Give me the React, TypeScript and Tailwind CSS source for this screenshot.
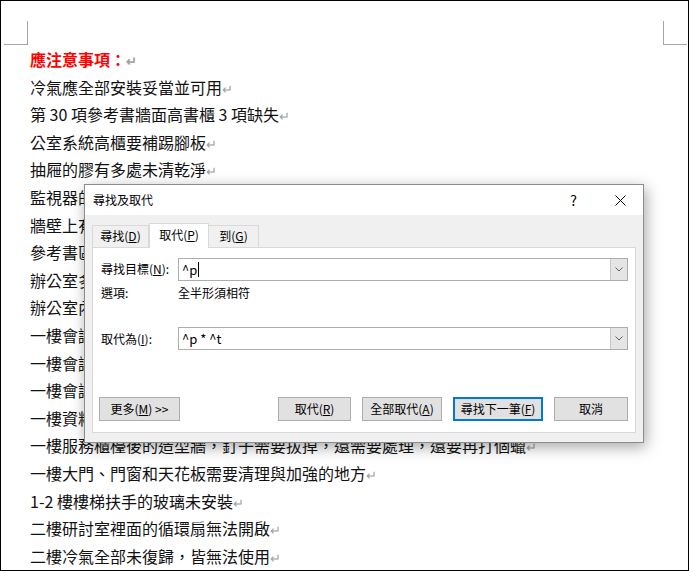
import React from 'react';

const font = { fontFamily: '"Noto Sans CJK TC", "Noto Sans", sans-serif' };

const lines = [
  '冷氣應全部安裝妥當並可用',
  '第 30 項參考書牆面高書櫃 3 項缺失',
  '公室系統高櫃要補踢腳板',
  '抽屜的膠有多處未清乾淨',
  '監視器的電源線需要整理',
  '牆壁上有多處油漆剝落',
  '參考書區的燈管不亮',
  '辦公室多處插座未固定',
  '辦公室內的窗簾需要更換',
  '一樓會議室桌椅需要清潔',
  '一樓會議室投影機無法使用',
  '一樓會議室門鎖故障',
  '一樓資料室的櫃子需要調整',
  '一樓服務櫃檯後的造型牆，釘子需要拔掉，還需要處理，還要再打個蠟',
  '一樓大門、門窗和天花板需要清理與加強的地方',
  '1-2 樓樓梯扶手的玻璃未安裝',
  '二樓研討室裡面的循環扇無法開啟',
  '二樓冷氣全部未復歸，皆無法使用',
];

const Mark = () => <span className="text-[#a0a0a0] text-[13px] leading-none">↵</span>;

const Btn = ({ children, w, primary }: { children: React.ReactNode; w: string; primary?: boolean }) => (
  <div
    className={`${w} h-[24px] flex items-center justify-center bg-[#e1e1e1] ${
      primary ? 'border-2 border-[#0078d7]' : 'border border-[#adadad]'
    }`}
  >
    {children}
  </div>
);

const Combo = ({ value }: { value: React.ReactNode }) => (
  <div className="flex-1 h-[23px] border border-[#adadad] bg-white flex items-stretch">
    <div className="flex-1 flex items-center pl-[3px] text-[13px]">{value}</div>
    <div className="w-[17px] bg-[#e5e5e5] border-l border-[#c8c8c8] flex items-center justify-center">
      <svg width="8" height="5" viewBox="0 0 8 5">
        <path d="M0.5 0.5 L4 4 L7.5 0.5" stroke="#606060" fill="none" strokeWidth="1" />
      </svg>
    </div>
  </div>
);

const Dialog = () => (
  <div
    className="absolute left-[83px] top-[183px] w-[560px] h-[259px] border border-[#8c8c8c] bg-[#f0f0f0] shadow-[2px_4px_14px_rgba(0,0,0,0.35)] text-[12px] text-black flex flex-col"
    style={font}
  >
    <div className="h-[30px] bg-white flex items-center pl-[8px] pr-[17px]">
      <span className="flex-1">尋找及取代</span>
      <span className="text-[14px] mr-[38px]">?</span>
      <svg width="11" height="11" viewBox="0 0 11 11">
        <path d="M0.5 0.5 L10.5 10.5 M10.5 0.5 L0.5 10.5" stroke="#000" strokeWidth="1" />
      </svg>
    </div>
    <div className="px-[7px] pt-[8px] flex flex-col">
      <div className="flex items-end h-[24px]">
        <div className="h-[22px] w-[57px] pb-[2px] border border-b-0 border-[#d9d9d9] flex items-center justify-center">
          尋找(<u>D</u>)
        </div>
        <div className="h-[25px] w-[60px] pb-[3px] -mb-px relative z-10 bg-white border border-b-0 border-[#d9d9d9] flex items-center justify-center">
          取代(<u>P</u>)
        </div>
        <div className="h-[22px] w-[50px] pb-[2px] border border-b-0 border-l-0 border-[#d9d9d9] flex items-center justify-center">
          到(<u>G</u>)
        </div>
      </div>
      <div className="h-[186px] bg-white border border-[#d9d9d9] pl-[6px] pr-[7px] pt-[10px] flex flex-col">
        <div className="flex items-center">
          <span className="w-[79px] pl-[2px] pb-[2px]">尋找目標(<u>N</u>):</span>
          <Combo value={<span className="flex items-center">^p<span className="inline-block w-px h-[15px] bg-black ml-[1px]" /></span>} />
        </div>
        <div className="flex items-center h-[16px] mt-[4px]">
          <span className="w-[79px] pl-[2px]">選項:</span>
          <span>全半形須相符</span>
        </div>
        <div className="flex items-center mt-[26px]">
          <span className="w-[79px] pl-[2px]">取代為(<u>I</u>):</span>
          <Combo value="^p * ^t" />
        </div>
        <div className="flex items-center mt-[47px]">
          <Btn w="w-[81px]">更多(<u>M</u>) &gt;&gt;</Btn>
          <div className="flex-1" />
          <div className="flex gap-[11px]">
            <Btn w="w-[73px]">取代(<u>R</u>)</Btn>
            <Btn w="w-[80px]">全部取代(<u>A</u>)</Btn>
            <Btn w="w-[90px]" primary>尋找下一筆(<u>F</u>)</Btn>
            <Btn w="w-[74px]">取消</Btn>
          </div>
        </div>
      </div>
    </div>
  </div>
);

export default function App() {
  return (
    <div className="relative w-[689px] h-[571px] bg-white border border-black overflow-hidden" style={font}>
      <div className="absolute left-[3px] top-[20px] w-[24px] h-[24px] border-r border-b border-[#a6a6a6]" />
      <div className="absolute left-[662px] top-[20px] w-[24px] h-[24px] border-l border-b border-[#a6a6a6]" />
      <div className="pt-[45px] pl-[29px] text-[16px] leading-[27.6px] text-[#111]">
        <div className="h-[27.6px] text-[#ff0000] font-bold whitespace-nowrap">
          應注意事項：<Mark />
        </div>
        {lines.map((l, i) => (
          <div key={i} className="h-[27.6px] whitespace-nowrap">
            {l}
            <Mark />
          </div>
        ))}
      </div>
      <Dialog />
    </div>
  );
}
